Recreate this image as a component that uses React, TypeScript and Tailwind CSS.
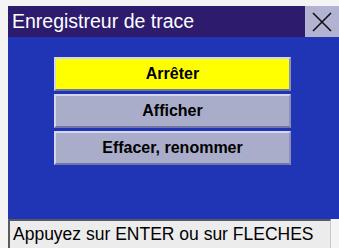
import React from "react";

const font = { fontFamily: '"Liberation Sans", Arial, sans-serif' };

function MenuButton({ label, active }: { label: string; active?: boolean }) {
  return (
    <div
      className={
        "h-[34px] w-[237px] flex items-center justify-center border-2 border-t-[#d4d6ea] border-l-[#d4d6ea] border-b-[#6f76a6] border-r-[#8a90b8] text-[16px] font-bold text-black " +
        (active ? "bg-[#ffff00]" : "bg-[#a9adc9]")
      }
    >
      {label}
    </div>
  );
}

export default function App() {
  return (
    <div
      className="w-[339px] h-[248px] bg-[#f4f4f4] pt-[6px] pl-[8px] flex flex-col overflow-hidden"
      style={font}
    >
      <div className="h-[31px] flex bg-[#2d1b6e]">
        <div className="flex-1 flex items-center pl-[4px] text-white text-[19.5px] leading-none">
          Enregistreur de trace
        </div>
        <div className="w-[34px] h-full bg-[#b2b3d3] flex items-center justify-center">
          <svg width="20" height="20" viewBox="0 0 20 20">
            <path d="M1 1 L19 19 M19 1 L1 19" stroke="#111" strokeWidth="1.6" fill="none" />
          </svg>
        </div>
      </div>
      <div className="h-[182px] bg-[#2034b6] pt-[20px] pl-[46px] flex flex-col gap-[3px]">
        <MenuButton label="Arrêter" active />
        <MenuButton label="Afficher" />
        <MenuButton label="Effacer, renommer" />
      </div>
      <div className="flex-1 flex">
        <div className="w-[323px] bg-[#ececec] border-t-2 border-l-2 border-t-[#5a5a5a] border-l-[#5a5a5a] border-r border-r-[#c8c8c8] flex items-center pl-[3px] text-[17.5px] text-black leading-none">
          Appuyez sur ENTER ou sur FLECHES
        </div>
      </div>
    </div>
  );
}
